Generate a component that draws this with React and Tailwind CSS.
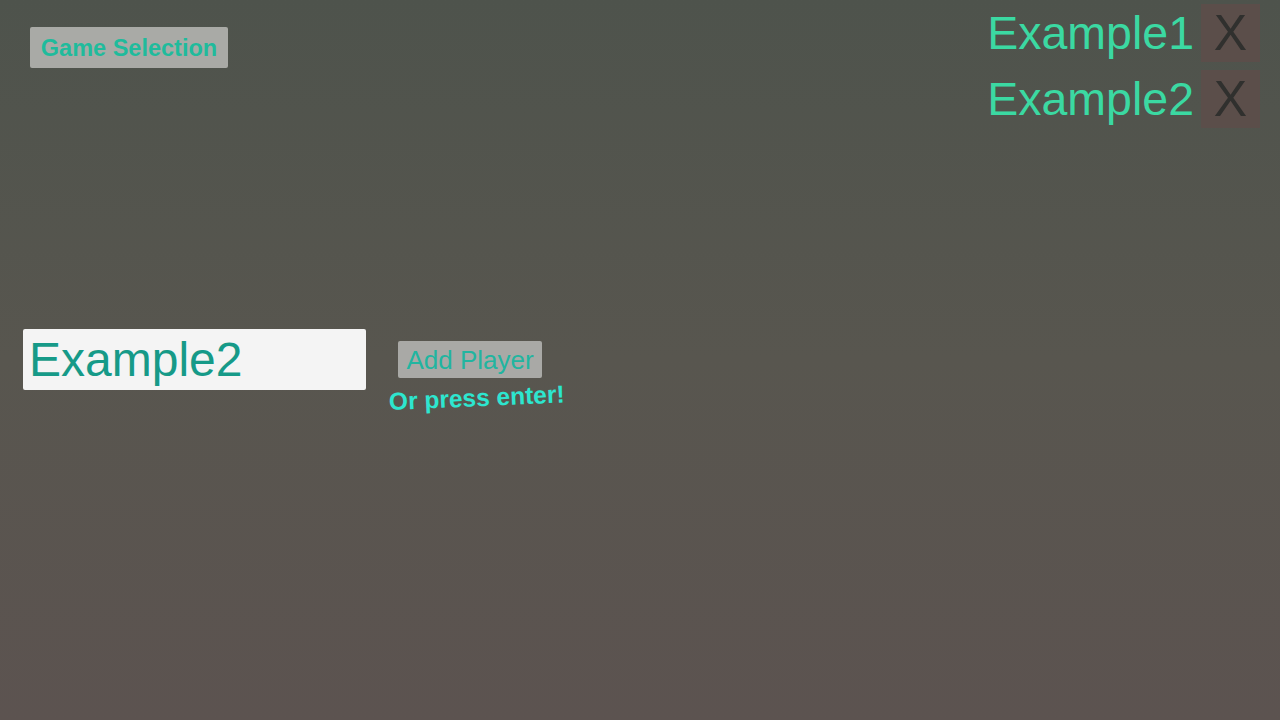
export default function App() {
  const font = { fontFamily: '"Liberation Sans", Arial, sans-serif' };
  return (
    <div
      className="w-[1280px] h-[720px] overflow-hidden flex flex-col bg-gradient-to-b from-[#4e534c] via-[#58564f] to-[#5c5350]"
      style={font}
    >
      <div className="flex items-start justify-between h-[128px]">
        <div className="pl-[30px] pt-[27px]">
          <div className="w-[198px] h-[41px] bg-[#a9aaa6] rounded-[2px] flex items-center justify-center pt-[2px] text-[23.5px] font-bold text-[#1fbb9c]">
            Game Selection
          </div>
        </div>
        <div className="flex flex-col items-end pr-[20px] pt-[4px] gap-[8px]">
          {["Example1", "Example2"].map((n) => (
            <div key={n} className="flex items-center h-[58px]">
              <span className="text-[46.5px] leading-none text-[#3bd9a2] mr-[7px]">{n}</span>
              <div className="w-[59px] h-[58px] bg-[#5b4e4a] flex items-center justify-center text-[50px] leading-none text-[#30302e]">
                X
              </div>
            </div>
          ))}
        </div>
      </div>
      <div className="flex items-start mt-[201px] pl-[23px]">
        <div className="w-[343px] h-[61px] bg-[#f4f4f4] rounded-[2px] flex items-center pl-[6px] text-[48px] leading-none text-[#169a88]">
          Example2
        </div>
        <div className="ml-[32px] pt-[12px] flex flex-col">
          <div className="w-[144px] h-[37px] bg-[#a9a9a6] rounded-[2px] flex items-center justify-center text-[26px] leading-none text-[#21b5a0]">
            Add Player
          </div>
          <div className="-ml-[9px] mt-[12px] text-[24.5px] font-bold leading-none text-[#2de6cf] -rotate-[2.5deg] origin-left whitespace-nowrap">
            Or press enter!
          </div>
        </div>
      </div>
    </div>
  );
}
